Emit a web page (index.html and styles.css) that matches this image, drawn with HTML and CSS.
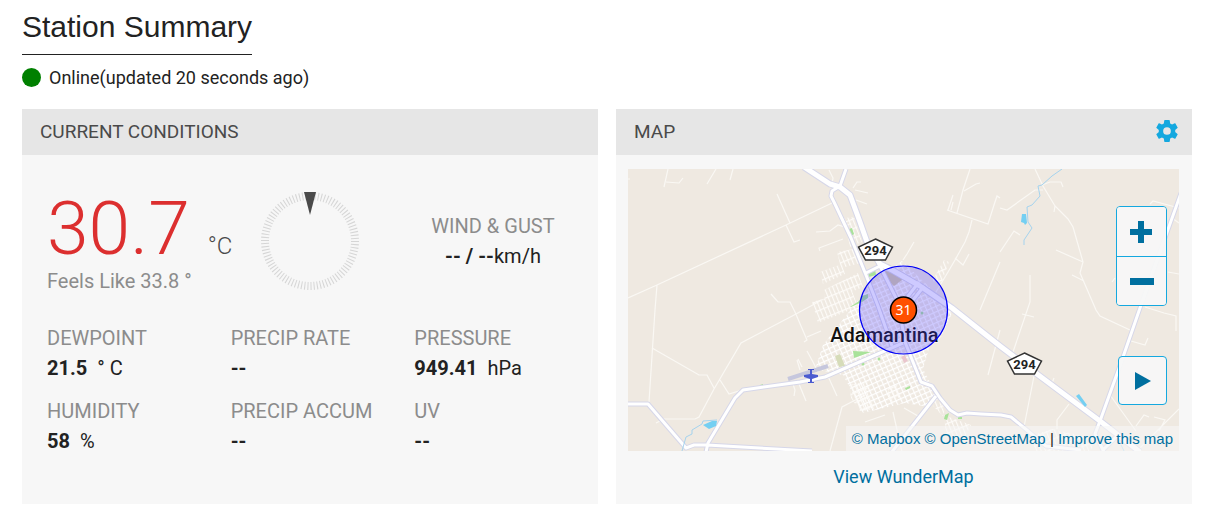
FILE: index.html
```html
<!DOCTYPE html>
<html lang="en">
<head>
  <meta charset="UTF-8" />
  <meta name="viewport" content="width=device-width, initial-scale=1.0"/>
  <title>Station Summary</title>
  <link rel="stylesheet" href="styles.css">
</head>
<body>

  <h1 class="page-title">Station Summary</h1>
  <div class="status"><span class="status-dot"></span>Online(updated 20 seconds ago)</div>

  <div class="panels">
    <section class="panel">
      <div class="panel-header"><h2>CURRENT CONDITIONS</h2></div>
      <div class="conditions">
        <div class="main-row">
          <div class="temp-block">
            <div class="temp"><span class="temp-value">30.7</span><span class="temp-unit">°C</span></div>
            <div class="feels">Feels Like 33.8 °</div>
          </div>
          <svg class="compass" viewBox="0 0 100 100" aria-hidden="true">
            <circle cx="50" cy="50" r="45" pathLength="270" fill="none" stroke="#d6d6d6" stroke-width="8" stroke-dasharray="1 2"/>
            <path d="M44 1h12l-6 23z" fill="#4a4a4a"/>
          </svg>
          <div class="wind">
            <div class="label">WIND &amp; GUST</div>
            <div class="value"><b>-- / --</b>km/h</div>
          </div>
        </div>
        <div class="readings">
          <div><div class="label">DEWPOINT</div><div class="value"><b>21.5</b> <span class="unit">° C</span></div></div>
          <div><div class="label">PRECIP RATE</div><div class="value"><b>--</b></div></div>
          <div><div class="label">PRESSURE</div><div class="value"><b>949.41</b> <span class="unit">hPa</span></div></div>
          <div><div class="label">HUMIDITY</div><div class="value"><b>58</b> <span class="unit">%</span></div></div>
          <div><div class="label">PRECIP ACCUM</div><div class="value"><b>--</b></div></div>
          <div><div class="label">UV</div><div class="value"><b>--</b></div></div>
        </div>
      </div>
    </section>

    <section class="panel">
      <div class="panel-header">
        <h2>MAP</h2>
        <button class="gear" aria-label="Map settings">
          <svg viewBox="2 2 20 20"><path fill="#14a8df" d="M19.43 12.98c.04-.32.07-.64.07-.98s-.03-.66-.07-.98l2.11-1.65c.19-.15.24-.42.12-.64l-2-3.46c-.12-.22-.39-.3-.61-.22l-2.49 1c-.52-.4-1.08-.73-1.69-.98l-.38-2.65C14.46 2.18 14.25 2 14 2h-4c-.25 0-.46.18-.49.42l-.38 2.65c-.61.25-1.17.59-1.69.98l-2.49-1c-.23-.09-.49 0-.61.22l-2 3.46c-.13.22-.07.49.12.64l2.11 1.65c-.04.32-.07.65-.07.98s.03.66.07.98l-2.11 1.65c-.19.15-.24.42-.12.64l2 3.46c.12.22.39.3.61.22l2.49-1c.52.4 1.08.73 1.69.98l.38 2.65c.03.24.24.42.49.42h4c.25 0 .46-.18.49-.42l.38-2.65c.61-.25 1.17-.59 1.69-.98l2.49 1c.23.09.49 0 .61-.22l2-3.46c.12-.22.07-.49-.12-.64l-2.11-1.65zM12 15.5a3.5 3.5 0 1 1 0-7 3.5 3.5 0 0 1 0 7z"/></svg>
        </button>
      </div>
      <div class="map-wrap">
        <div class="map">
          <svg class="map-tiles" viewBox="628 169 551 282" preserveAspectRatio="xMidYMid slice">
            <defs>
              <pattern id="blocks" width="5" height="5" patternUnits="userSpaceOnUse" patternTransform="rotate(-24)">
                <path d="M0 .5h5M.5 0v5" stroke="#fff" stroke-width="1.3" fill="none"/>
              </pattern>
              <pattern id="lanes" width="4" height="9" patternUnits="userSpaceOnUse" patternTransform="rotate(-22)">
                <path d="M0 .5h4M.5 0v9" stroke="#fdfbf8" stroke-width="1.3" fill="none"/>
              </pattern>
            </defs>
            <rect x="628" y="169" width="551" height="282" fill="#efe9e1"/>

            <!-- country tracks -->
            <g fill="none" stroke="#faf8f4" stroke-width="1.2">
              <path d="M628 298l29-13 129-60 46-22M657 285l-2 25-6 92M777 194l13 29M786 225l8 17 6-2"/>
              <path d="M668 169l-4 18M666 182l13 1 4-5M716 169l-9 15M733 169l-3 11M628 179h2"/>
              <path d="M771 294l7 8h12l5 10 12 28-3 2M807 337l14-6M820 301l-24 13-55 29-27 46-15 28-4 2h-31l-8 4M652 348l47 27h8l7 13M720 380l9 14 13-4"/>
              <path d="M797 360l3 10M807 351l6 11 5 10M798 359l4 8M793 384l2 6-1 6M799 384l7 17M827 374l10 22"/>
              <path d="M865 395l-23 12-12 44M893 412l9 40M904 408l14 8M865 422l20-7"/>
              <path d="M816 232l14-1 8-6 7 2 6-4M820 251l-1-3 24-9M853 188l4-6h4M855 190l13 3M856 200l11 4M829 170l4 8-1 6"/>
              <path d="M970 169l-7 21-6 23M948 210l5-15M951 210l2-8M964 191l12-7 4-1M947 210l41 14 6-19 3-9 3 2M988 224h-1M972 220l-3 12-4 10-10 18-7 12-18 30M1000 262l-20 48M955 258l8 7 6-11M914 242l-7 12-4 6"/>
              <path d="M1035 169l8 17 12 20 13 13 5 8 10 35-3 11 16 37 4 6 30 14M1056 250l27 12M1072 275l12 6M1055 206l-1 6M1000 208l7 2 28-20h8M1042 185l8-3h11l2 5M1000 252l14-21 6 4M1030 275v27l-17 50M1022 314l12 3"/>
              <path d="M1000 330l-12 45M1034 376l-10 51M1051 386l3-8M1069 404l-12 16v9M1110 395l26 36M1136 426l8-11 5 2M1179 409l-42 42M1154 417l11 3-6 11M1145 307l19 6 12 3v15M1131 341l14 4 3-7M1150 204l3-3 26 7M1168 272l11 2M1172 218l7 5M1115 278l-3 4"/>
            </g>

            <!-- town blocks -->
            <path fill="url(#blocks)" d="M870 285l32-24 44 42 9 4-14 30-11 8-7 24 16 30-10 8-24-4-42 10-20-38-28-6 8-24z"/>
            <path fill="url(#lanes)" d="M844 218l10-1 8 25-12 5zM837 252l22-4 6 14-24 6zM820 272l22-8 3 10-22 10zM824 290l34-17 5 14-28 12-10 4zM812 302l40-11 6 16-40 16zM944 260l5 2-8 22-9-3zM849 385l18-4 2 16 8 12-17 2-9-13zM888 388l9-3 3 12-8 6-4-5zM944 415l27 10-8 16-17-7zM936 400l10 7-3 9-10-10z"/>
            <path fill="url(#lanes)" d="M1030 436l22-7 44 10-5 12h-55z"/>

            <!-- parks -->
            <g fill="#a9e29a">
              <path d="M849 229l3-1 2 6-3 2zM868 272l7-3 1 6-7 2zM850 307l9-6 3-5 6-2v4l-6 4-11 5zM853 351l18 1-17 6zM945 415l4-2-2 7-3-1zM905 388l5-2v2l-4 2zM958 417h4v2h-4zM760 385l3-1v2h-3zM1076 446h2v4h-2z"/>
              <circle cx="863" cy="364" r="1.5"/><circle cx="879" cy="359" r="1.5"/><circle cx="922" cy="313" r="1.5"/>
              <path d="M835 356l5-2 5 12-6 1z" fill="#d6dcb9"/>
              <path d="M880 262l10 3 13 14-9 7-13-12z" fill="#d6cdaa"/>
            </g>
            <path d="M903 356l3 6" stroke="#eac6ce" stroke-width="4"/>

            <!-- highways, casing first -->
            <g fill="none" stroke-linejoin="round">
              <g stroke="#d6d7e9">
                <path stroke-width="7" d="M804 167l26 17 10 3 10 8 10 27 7 20 13 22 12 6 28 16 32 22 48 38 37 28 63 47 40 31"/>
                <path stroke-width="5" d="M846 169l-6 17-8 5-1 5 3 6 17 36 15 37 12 31 14 40M866 273l14-7M876 258l22 44 7 40 16 40 11 4 8 12 10 12 8 5 9-2 14 1 20 1 10 2 17 14 18 15 35 4"/>
                <path stroke-width="5" d="M628 404h20l38 44 8-3h13l105 6M706 452l2-9 27-45 8-8 57-8 25-5 78-34M936 396l-45 57M1181 193l-41 115-18 52-22 61-5 13 10 20M1117 436l-15 15M905 300l14-18M910 304l14-18"/>
              </g>
              <g stroke="#fff">
                <path stroke-width="5" d="M804 167l26 17 10 3 10 8 10 27 7 20 13 22 12 6 28 16 32 22 48 38 37 28 63 47 40 31"/>
                <path stroke-width="3" d="M846 169l-6 17-8 5-1 5 3 6 17 36 15 37 12 31 14 40M866 273l14-7M876 258l22 44 7 40 16 40 11 4 8 12 10 12 8 5 9-2 14 1 20 1 10 2 17 14 18 15 35 4"/>
                <path stroke-width="3" d="M628 404h20l38 44 8-3h13l105 6M706 452l2-9 27-45 8-8 57-8 25-5 78-34M936 396l-45 57M1181 193l-41 115-18 52-22 61-5 13 10 20M1117 436l-15 15M905 300l14-18M910 304l14-18"/>
              </g>
            </g>

            <!-- water -->
            <g fill="#74cff2">
              <path d="M703 425l9-4h5l-1 5-7 3zM1022 214h4l1 9-2 2-1-2-3-1zM1076 396l3-2 8 11-2 2z"/>
              <path d="M682 451l4-14 6-3v-4l10-6 1-3 14-1M1062 169l-10 7-10 9-4 1 2 10-8 9-5 2 1 15 4 6-8 12v5M1121 445l3 6" fill="none" stroke="#a5d3ee"/>
            </g>

            <!-- airport -->
            <path d="M788 379l40-13" stroke="#c6c7dd" stroke-width="4"/>
            <path d="M808 369h6v1h-2v4l6 1v2l-6 2v3h2v1h-6v-1h2v-3l-6-2v-2l6-1v-4h-2z" fill="#4b5bd0"/>

            <!-- route shields -->
            <g class="shield">
              <path d="M875.500 239l17 8-7 13h-20l-7-13z"/>
              <text x="875.500" y="255">294</text>
              <path d="M1024.500 353l17 8-7 13h-20l-7-13z"/>
              <text x="1024.500" y="369">294</text>
            </g>
            <text class="town" x="884.500" y="342">Adamantina</text>

            <!-- station marker -->
            <circle cx="903.500" cy="310" r="44" fill="#4b3bff" fill-opacity=".27" stroke="#0000f5" stroke-width="1.200"/>
            <circle cx="903.500" cy="310" r="13" fill="#ff5000" stroke="#000" stroke-width="1.500"/>
            <text class="marker" x="903.500" y="315">31</text>
          </svg>

          <div class="zoom-controls">
            <button aria-label="Zoom in"><svg viewBox="0 0 24 24"><path d="M8 1h6v8h8v6h-8v8H8v-8H0V9h8z"/></svg></button>
            <button aria-label="Zoom out"><svg viewBox="0 0 24 24"><path d="M0 9h24v7H0z"/></svg></button>
          </div>
          <button class="play" aria-label="Play"><svg viewBox="0 0 24 24"><path d="M4 3l16 9-16 9z"/></svg></button>
          <div class="attribution"><a href="#">© Mapbox</a> <a href="#">© OpenStreetMap</a> | <a href="#">Improve this map</a></div>
        </div>
        <a class="wundermap" href="#">View WunderMap</a>
      </div>
    </section>
  </div>

</body>
</html>
```
FILE: styles.css
```css
* {
  box-sizing: border-box;
}
body {
  margin: 0;
  padding: 0 18px 9px 22px;
  background: #fff;
  color: #222;
  font-family: Roboto, sans-serif;
  font-size: 18px;
}
h1, h2 {
  margin: 0;
  font-weight: 400;
}
.page-title {
  display: inline-block;
  height: 55px;
  border-bottom: 1px solid #222;
  font-family: "Liberation Sans", Arial, sans-serif;
  font-size: 30px;
  line-height: 54px;
}
.status {
  display: flex;
  align-items: center;
  gap: 8px;
  height: 44px;
  margin-bottom: 10px;
}
.status-dot {
  width: 19px;
  height: 19px;
  border-radius: 50%;
  background: #008000;
}
.panels {
  display: grid;
  grid-template-columns: 1fr 1fr;
  gap: 18px;
}
.panel {
  background: #f7f7f7;
}
.panel-header {
  display: flex;
  align-items: center;
  justify-content: space-between;
  height: 46px;
  padding: 0 14px 2px 18px;
  background: #e6e6e6;
}
.panel-header h2 {
  color: #4a4a4a;
  font-size: 19px;
}
.gear {
  width: 22px;
  height: 22px;
  padding: 0;
  border: 0;
  background: none;
  cursor: pointer;
}
.gear svg {
  display: block;
}

/* current conditions */
.conditions {
  padding: 36px 0 48px 25px;
}
.main-row {
  display: grid;
  grid-template-columns: 213px 100px 1fr;
  height: 132px;
}
.temp {
  height: 75px;
  line-height: 75px;
  font-weight: 300;
}
.temp-value {
  color: #dc2f2f;
  font-size: 75px;
}
.temp-unit {
  margin-left: 18px;
  color: #4a4a4a;
  font-size: 24px;
}
.feels, .label {
  color: #8c8c8c;
}
.feels, .label, .value {
  font-size: 20px;
  line-height: 30px;
}
.compass {
  width: 100px;
  height: 100px;
}
.wind {
  padding: 20px 0 0 28px;
  text-align: center;
}
.unit {
  margin-left: 5px;
}
.readings {
  display: grid;
  grid-template-columns: 1fr 1fr 1fr;
  row-gap: 13px;
}

/* map */
.map-wrap {
  padding: 14px 13px 12px 12px;
  text-align: center;
}
.map {
  position: relative;
  height: 282px;
}
.map-tiles {
  display: block;
  width: 100%;
  height: 100%;
}
.shield path {
  fill: #fff;
  stroke: #333;
  stroke-width: 1.5;
}
.shield text, .town, .marker {
  text-anchor: middle;
}
.shield text {
  fill: #222;
  font-size: 13px;
  font-weight: 700;
}
.town {
  fill: #111;
  stroke: #fff;
  stroke-width: 1;
  paint-order: stroke;
  font-size: 20px;
  font-weight: 500;
}
.marker {
  fill: #fff;
  font-family: "Noto Sans", sans-serif;
  font-size: 14px;
}
.zoom-controls {
  position: absolute;
  top: 37px;
  right: 12px;
  border: 1px solid #14a8df;
  border-radius: 4px;
  overflow: hidden;
}
.zoom-controls button, .play {
  display: flex;
  align-items: center;
  justify-content: center;
  width: 49px;
  height: 49px;
  padding: 0;
  border: 0;
  background: rgba(247, 247, 247, 0.95);
  cursor: pointer;
}
.zoom-controls button + button {
  border-top: 1px solid #14a8df;
}
.zoom-controls svg, .play svg {
  width: 24px;
  height: 24px;
  fill: #006f9f;
}
.map .play {
  position: absolute;
  top: 187px;
  right: 12px;
  border: 1px solid #14a8df;
  border-radius: 4px;
}
.attribution {
  position: absolute;
  right: 0;
  bottom: 0;
  padding: 0 6px;
  background: rgba(247, 247, 247, 0.6);
  font-family: "Liberation Sans", Arial, sans-serif;
  font-size: 15px;
  line-height: 25px;
}
a {
  color: #006f9f;
  text-decoration: none;
}
.wundermap {
  display: inline-block;
  margin-top: 11px;
  line-height: 30px;
}
```
